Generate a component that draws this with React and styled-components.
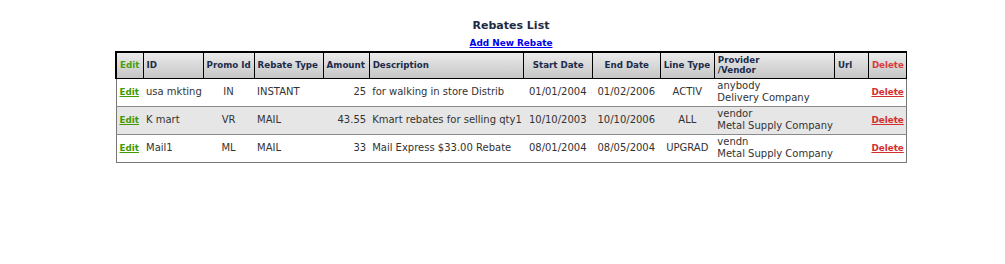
import React from 'react';
import styled, { createGlobalStyle } from 'styled-components';

const GlobalStyle = createGlobalStyle`
  html, body {
    margin: 0;
    padding: 0;
    background: #fff;
  }
  body {
    font-family: "DejaVu Sans", Verdana, sans-serif;
  }
`;

const Page = styled.div`
  width: 1005px;
  padding: 18px 0 0 17px;
  box-sizing: border-box;
  display: flex;
  flex-direction: column;
  align-items: center;
`;

const Title = styled.h1`
  margin: 0;
  font: bold 11px "DejaVu Sans", Verdana, sans-serif;
  color: #1e2b45;
  line-height: 16px;
`;

const AddLink = styled.a`
  margin-top: 2px;
  font: bold 8.9px "DejaVu Sans", Verdana, sans-serif;
  color: #0000ee;
  text-decoration: underline;
  line-height: 14px;
`;

const Table = styled.table`
  margin-top: 1px;
  width: 792px;
  table-layout: fixed;
  border-collapse: collapse;
  border-left: 1px solid #777;
  border-right: 1px solid #777;
  border-bottom: 1px solid #777;
  font: 10px "DejaVu Sans", Verdana, sans-serif;
  color: #333;
`;

const HeadRow = styled.tr`
  height: 26px;
  background: linear-gradient(#ececec, #c6c6c6);
`;

const Th = styled.th`
  border: 1px solid #000;
  border-top-width: 2px;
  padding: 0 2px 0 3px;
  font: bold 8.7px "DejaVu Sans", Verdana, sans-serif;
  line-height: 10px;
  white-space: nowrap;
  overflow: hidden;
  text-align: ${(p) => p.$align || 'left'};
  color: ${(p) => p.$color || '#1b2b4b'};
  &:first-child {
    border-left-width: 2px;
  }
`;

const Row = styled.tr`
  height: 28px;
  background: ${(p) => (p.$shade ? '#e6e6e6' : '#fff')};
  border-top: 1px solid #8a8a8a;
`;

const Td = styled.td`
  padding: 0 3px;
  line-height: 12px;
  white-space: nowrap;
  overflow: hidden;
  text-align: ${(p) => p.$align || 'left'};
`;

const ActionLink = styled.a`
  font: bold 8.8px "DejaVu Sans", Verdana, sans-serif;
  color: ${(p) => p.$color};
  text-decoration: underline;
`;

const columns = [
  { label: 'Edit', width: 27, color: '#48a010' },
  { label: 'ID', width: 60 },
  { label: 'Promo Id', width: 51 },
  { label: 'Rebate Type', width: 69 },
  { label: 'Amount', width: 46 },
  { label: 'Description', width: 154 },
  { label: 'Start Date', width: 69, align: 'center' },
  { label: 'End Date', width: 68, align: 'center' },
  { label: 'Line Type', width: 54 },
  { label: <>Provider<br />/Vendor</>, width: 120 },
  { label: 'Url', width: 34 },
  { label: 'Delete', width: 38, color: '#d83a3a' },
];

const rebates = [
  {
    id: 'usa mkting', promo: 'IN', type: 'INSTANT', amount: '25',
    desc: 'for walking in store Distrib', start: '01/01/2004', end: '01/02/2006',
    line: 'ACTIV', provider: 'anybody', vendor: 'Delivery Company',
  },
  {
    id: 'K mart', promo: 'VR', type: 'MAIL', amount: '43.55',
    desc: 'Kmart rebates for selling qty1', start: '10/10/2003', end: '10/10/2006',
    line: 'ALL', provider: 'vendor', vendor: 'Metal Supply Company',
  },
  {
    id: 'Mail1', promo: 'ML', type: 'MAIL', amount: '33',
    desc: 'Mail Express $33.00 Rebate', start: '08/01/2004', end: '08/05/2004',
    line: 'UPGRAD', provider: 'vendn', vendor: 'Metal Supply Company',
  },
];

export default function App() {
  return (
    <>
      <GlobalStyle />
      <Page>
        <Title>Rebates List</Title>
        <AddLink href="#">Add New Rebate</AddLink>
        <Table>
          <colgroup>
            {columns.map((c, i) => (
              <col key={i} style={{ width: c.width }} />
            ))}
          </colgroup>
          <thead>
            <HeadRow>
              {columns.map((c, i) => (
                <Th key={i} $align={c.align} $color={c.color}>
                  {c.label}
                </Th>
              ))}
            </HeadRow>
          </thead>
          <tbody>
            {rebates.map((r, i) => (
              <Row key={r.id} $shade={i === 1}>
                <Td>
                  <ActionLink href="#" $color="#3f9a00">Edit</ActionLink>
                </Td>
                <Td>{r.id}</Td>
                <Td $align="center">{r.promo}</Td>
                <Td>{r.type}</Td>
                <Td $align="right">{r.amount}</Td>
                <Td>{r.desc}</Td>
                <Td $align="center">{r.start}</Td>
                <Td $align="center">{r.end}</Td>
                <Td $align="center">{r.line}</Td>
                <Td>
                  {r.provider}
                  <br />
                  {r.vendor}
                </Td>
                <Td />
                <Td $align="right">
                  <ActionLink href="#" $color="#d42e2e">Delete</ActionLink>
                </Td>
              </Row>
            ))}
          </tbody>
        </Table>
      </Page>
    </>
  );
}
